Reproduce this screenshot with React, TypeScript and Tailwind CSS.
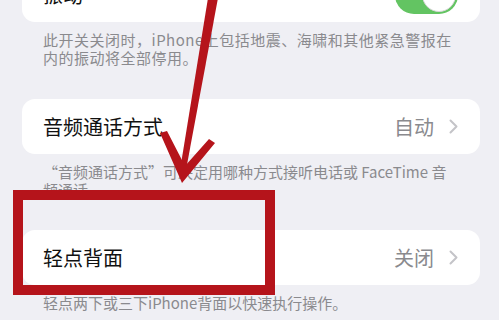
import React from "react";

const font = { fontFamily: '"Noto Sans CJK SC", "Noto Sans", sans-serif' };

function Chevron() {
  return (
    <svg width="9" height="15" viewBox="0 0 9 15" className="ml-[15px]">
      <polyline points="1.5,1.5 7.5,7.5 1.5,13.5" fill="none" stroke="#c4c4c8" strokeWidth="2" strokeLinecap="round" strokeLinejoin="round" />
    </svg>
  );
}

function Row({ label, value, className }: { label: string; value: string; className?: string }) {
  return (
    <div className={"ml-[22px] mr-[19px] h-[55px] rounded-[13px] bg-white flex items-center justify-between pl-[21px] pr-[22px] " + (className ?? "")}>
      <span className="text-[20px] text-[#111111] leading-none">{label}</span>
      <div className="flex items-center">
        <span className="text-[20px] text-[#8a8a8e] leading-none">{value}</span>
        <Chevron />
      </div>
    </div>
  );
}

export default function App() {
  return (
    <div className="relative w-[499px] h-[320px] overflow-hidden bg-[#efeff4]" style={font}>
      <div className="flex flex-col">
        <div className="-mt-[33px] ml-[22px] mr-[19px] h-[55px] rounded-[13px] bg-white flex items-center justify-between pl-[21px] pr-[22px]">
          <span className="text-[20px] text-[#111111] leading-none">振动</span>
          <div className="w-[63px] h-[38px] rounded-full bg-[#63c462] flex items-center justify-end pr-[2px]">
            <div className="w-[34px] h-[34px] rounded-full bg-white border border-[#d8d8d8]" />
          </div>
        </div>
        <div className="pl-[43px] pt-[9px] text-[15px] leading-[18px] tracking-[0.5px] text-[#8a8a8e] whitespace-nowrap">
          此开关关闭时，iPhone上包括地震、海啸和其他紧急警报在
          <br />
          内的振动将全部停用。
        </div>
        <Row label="音频通话方式" value="自动" className="mt-[32px]" />
        <div className="pl-[43px] pt-[9px] text-[15px] leading-[18px] text-[#8a8a8e] whitespace-nowrap">
          “音频通话方式”可决定用哪种方式接听电话或 FaceTime 音
          <br />
          频通话。
        </div>
        <Row label="轻点背面" value="关闭" className="mt-[31px]" />
        <div className="pl-[43px] pt-[9px] text-[15px] leading-[18px] text-[#8a8a8e] whitespace-nowrap">
          轻点两下或三下iPhone背面以快速执行操作。
        </div>
      </div>

      {/* red highlight box */}
      <div className="absolute left-[13px] top-[190px] w-[262px] h-[105px] border-[10px] border-[#b5141b]" />

      {/* red arrow */}
      <svg className="absolute left-0 top-0" width="499" height="320" viewBox="0 0 499 320">
        <polygon points="208,-2 218,-2 186,170 180,170" fill="#b5141b" />
        <polygon points="160,133 167,131 185,166 209,139 215,143 182,183" fill="#b5141b" />
      </svg>
    </div>
  );
}
